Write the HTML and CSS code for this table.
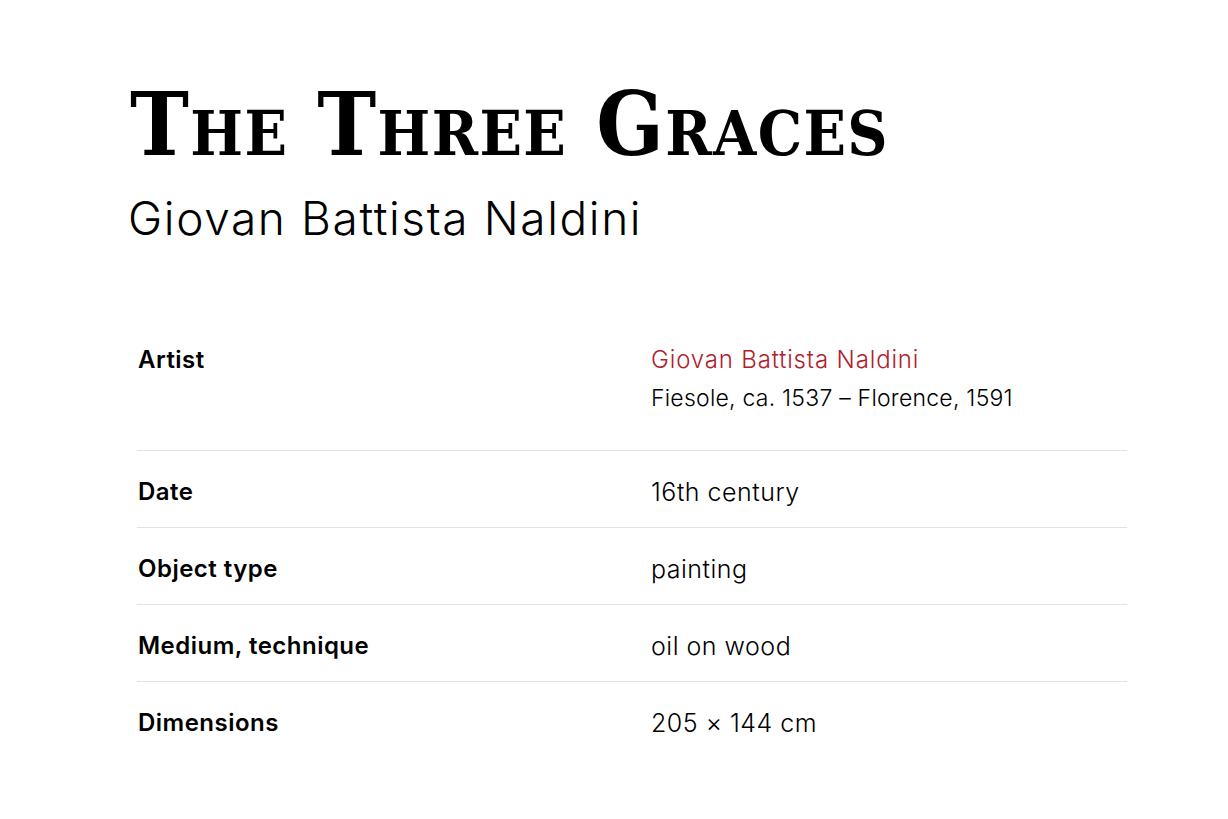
FILE: index.html
```html
<!DOCTYPE html>
<html lang="en">
<head>
<meta charset="utf-8">
<title>The Three Graces</title>
<link rel="stylesheet" href="styles.css">
</head>
<body>
<main class="page">
  <header class="heading">
    <h1 class="title">The Three Graces</h1>
    <p class="subtitle">Giovan Battista Naldini</p>
  </header>
  <dl class="facts">
    <div class="row">
      <dt class="label">Artist</dt>
      <dd class="value">
        <a class="artist-link" href="#">Giovan Battista Naldini</a>
        <span class="artist-dates">Fiesole, ca. 1537 – Florence, 1591</span>
      </dd>
    </div>
    <div class="row">
      <dt class="label">Date</dt>
      <dd class="value">16th century</dd>
    </div>
    <div class="row">
      <dt class="label">Object type</dt>
      <dd class="value">painting</dd>
    </div>
    <div class="row">
      <dt class="label">Medium, technique</dt>
      <dd class="value">oil on wood</dd>
    </div>
    <div class="row">
      <dt class="label">Dimensions</dt>
      <dd class="value">205 × 144 cm</dd>
    </div>
  </dl>
</main>
</body>
</html>
```
FILE: styles.css
```css
html, body {
  margin: 0;
  padding: 0;
  background: #fff;
  color: #000;
}
body {
  font-family: "Inter", "Liberation Sans", sans-serif;
  font-variant-ligatures: none;
}
.page {
  padding: 80px 0 0 130px;
  width: 997px;
}
.heading {
  display: flex;
  flex-direction: column;
}
.title {
  margin: 0;
  font-family: "DejaVu Serif Condensed", "DejaVu Serif", serif;
  font-stretch: condensed;
  font-weight: 700;
  font-variant: small-caps;
  font-size: 88px;
  line-height: 88px;
  letter-spacing: 1.4px;
}
.subtitle {
  margin: 22px 0 0 -2px;
  font-weight: 300;
  font-size: 46px;
  line-height: 56px;
  letter-spacing: 0.035em;
}
.facts {
  margin: 73px 0 0 7px;
  padding: 0;
  width: 990px;
}
.row {
  display: grid;
  grid-template-columns: 514px 1fr;
  padding: 23px 0 17px;
  border-bottom: 1px solid #e3e3e3;
}
.row:first-child {
  padding-bottom: 28px;
}
.row:last-child {
  border-bottom: none;
}
.label {
  margin: 0;
  padding-left: 1px;
  font-weight: 600;
  font-size: 24px;
  line-height: 36px;
  letter-spacing: 0.02em;
}
.value {
  margin: 0;
  display: flex;
  flex-direction: column;
  font-weight: 300;
  font-size: 25px;
  line-height: 36px;
  letter-spacing: 0.02em;
}
.artist-link {
  color: #b0202c;
  text-decoration: none;
  font-size: 24px;
  letter-spacing: 0.035em;
}
.artist-dates {
  font-size: 23px;
  line-height: 40px;
  letter-spacing: 0.01em;
  margin-bottom: 4px;
}
```
